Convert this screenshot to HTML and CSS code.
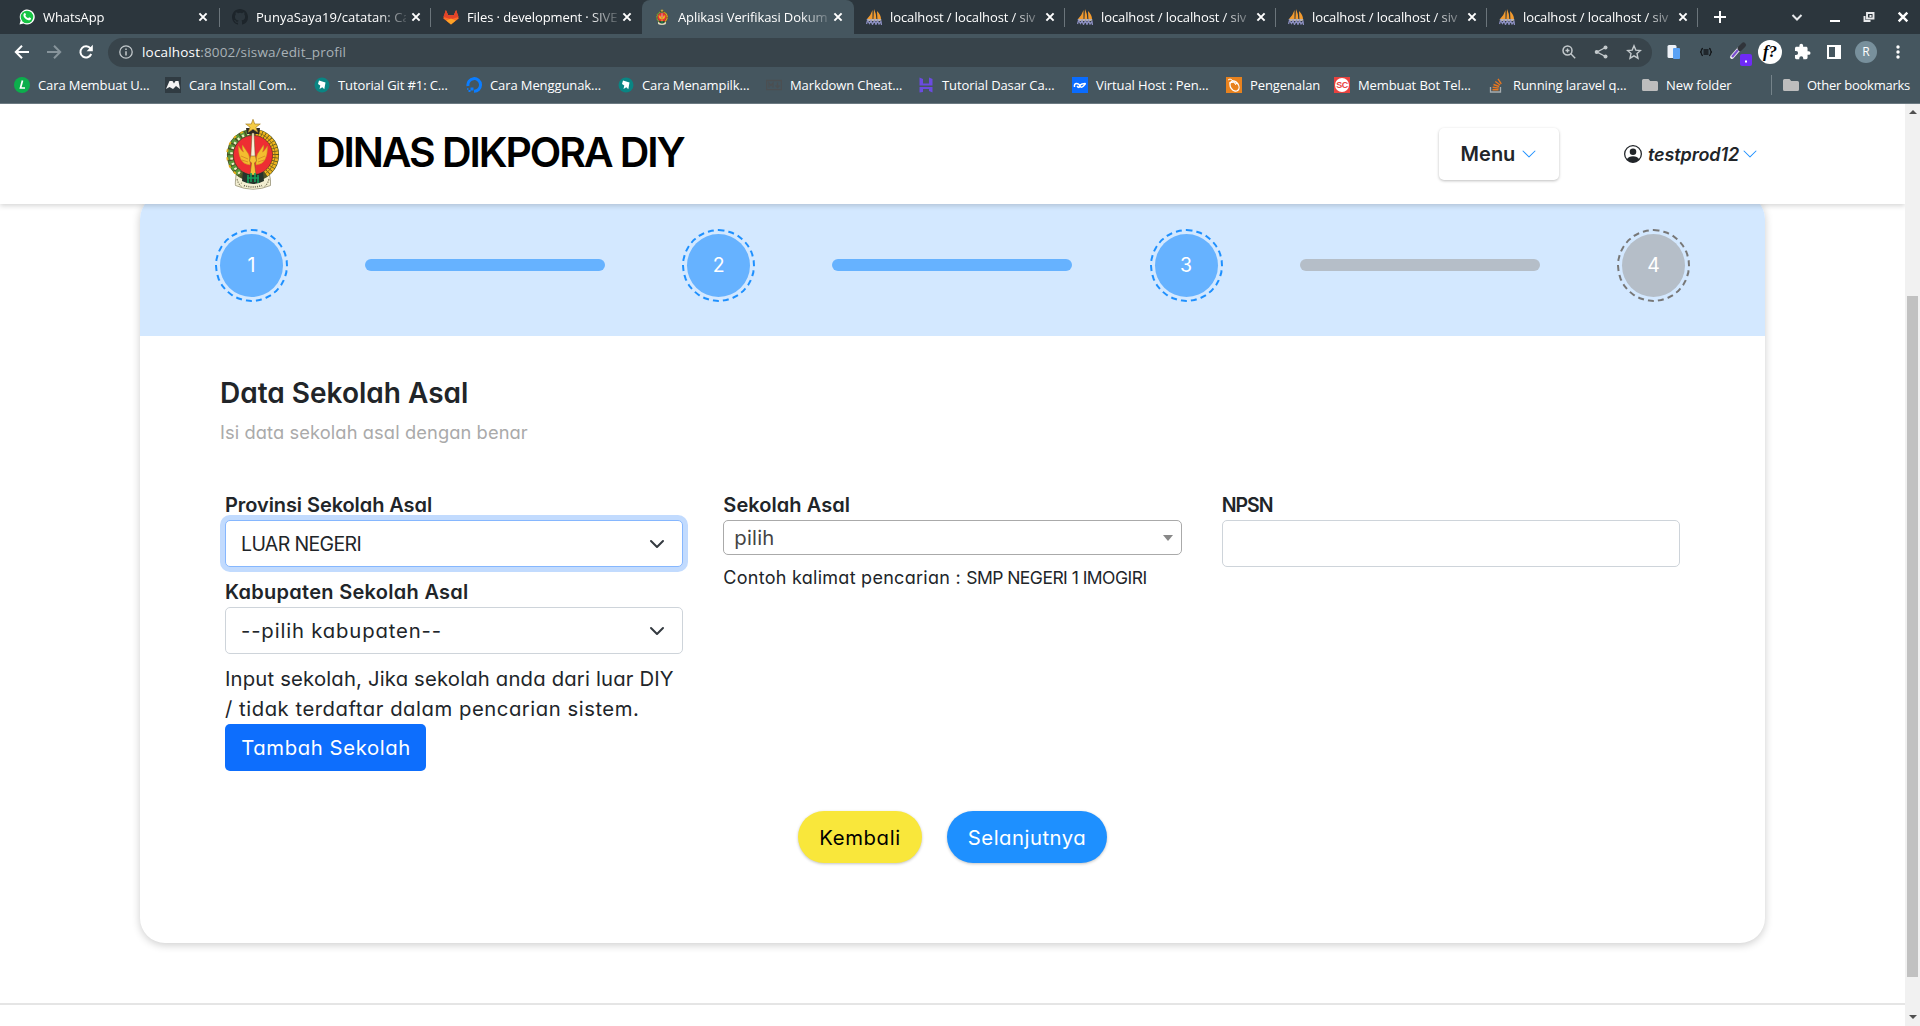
FILE: index.html
```html
<!DOCTYPE html>
<html lang="id">
<head>
<meta charset="utf-8">
<title>Aplikasi Verifikasi Dokumen</title>
<link rel="stylesheet" href="styles.css">
</head>
<body>
<svg class="defs" aria-hidden="true">
  <symbol id="i-close" viewBox="0 0 10 10"><path d="M1.4 1.4l7.2 7.2M8.6 1.4L1.4 8.6" stroke="#fff" stroke-width="2" fill="none"/></symbol>
  <symbol id="i-pma" viewBox="0 0 16 16">
    <path d="M6.500 1v9H1Q5 6 6.500 1zM8 0q2.500 5 2.300 10H7.400zM11 2q4 4 4 8h-3.600z" fill="#f29a2e"/>
    <path d="M.5 10h15l-1 2h-13z" fill="#b9b3ad"/><path d="M.5 15l1-3.500 2 3 1.500-3 1.500 4 2-4 1.500 4 1.500-4 1.500 3.500 2-2.500.5 3.500" stroke="#8c8fc0" stroke-width="1.300" fill="none"/>
  </symbol>
  <symbol id="i-folder" viewBox="0 0 16 14"><path d="M1.500 1h5l1.700 2h6.300Q16 3 16 4.500v7Q16 13 14.500 13h-13Q0 13 0 11.500v-9Q0 1 1.500 1z" fill="#bdbdbd"/></symbol>
  <symbol id="i-teal" viewBox="0 0 16 16"><circle cx="8" cy="8" r="7.500" fill="#0a8583"/><path d="M5 3.500l6.500 2-1.200 6.700-2-2L5.500 12l.8-3.500L4 7z" fill="#fff"/></symbol>
  <symbol id="i-chev" viewBox="0 0 16 16"><path fill-rule="evenodd" fill="currentColor" d="M1.646 4.646a.5.5 0 0 1 .708 0L8 10.293l5.646-5.647a.5.5 0 0 1 .708.708l-6 6a.5.5 0 0 1-.708 0l-6-6a.5.5 0 0 1 0-.708z"/></symbol>
  <symbol id="i-emblem" viewBox="0 0 54 71">
    <path d="M10 56q-1 9-.5 10.500Q27 74 44.500 66.500 45 60 43.500 56z" fill="#f3efd2" stroke="#8a8568" stroke-width=".7"/>
    <circle cx="27" cy="36" r="22.800" fill="none" stroke="#4c5226" stroke-width="6.600"/>
    <path d="M24 13.500A22.800 22.800 0 0 0 15 55" fill="none" stroke="#57983a" stroke-width="6.400" stroke-dasharray="4 1.400"/>
    <path d="M23 14.500A22.800 22.800 0 0 0 14 54.500" fill="none" stroke="#eef0c8" stroke-width="2.600" stroke-dasharray="2 3.400"/>
    <path d="M25 11.500A24.500 24.500 0 0 0 13 57" fill="none" stroke="#e3ab18" stroke-width="1.800" stroke-dasharray="3 5"/>
    <path d="M30 13.500A22.800 22.800 0 0 1 39 55" fill="none" stroke="#f0b51c" stroke-width="6.400" stroke-dasharray="2.500 .7"/>
    <path d="M30 13.500A22.800 22.800 0 0 1 39 55" fill="none" stroke="#83651a" stroke-width=".8"/>
    <circle cx="27" cy="36" r="19.600" fill="#ee2e33" stroke="#5b1512" stroke-width=".6"/>
    <path d="M20 9h14l-1 6H21z" fill="#2d2a25"/>
    <path d="M24 46Q12 45 12.500 27q3 5 5 6-2-4-1-7 4 6 6 9 2 4 1.500 11zM30 46q12-1 11.500-19-3 5-5 6 2-4 1-7-4 6-6 9-2 4-1.500 11z" fill="#f4bd2e" stroke="#c68420" stroke-width=".5"/>
    <path d="M15 37l7 3M16 41l6 2M39 37l-7 3M38 41l-6 2" stroke="#cf7b23" stroke-width=".7"/>
    <path d="M26 14h2l1.200 24h-4.400z" fill="#f8f1d8" stroke="#6e5325" stroke-width=".5"/>
    <path d="M24.500 37h5l1 5-2 2 1.500 12h-6l1.500-12-2-2z" fill="#f6c336" stroke="#6e5325" stroke-width=".5"/>
    <path d="M17 53q10 6 20 0l1 9q-11 6-22 0z" fill="#25342c"/>
    <path d="M22 56v8M25 54v9M29 54v9M32 56v8M21 59h12" stroke="#16a05c" stroke-width="1.600"/>
    <path d="M11 60q2 8 7 7M43 60q-2 8-7 7M15 64q12 6 24 0" fill="none" stroke="#7d785d" stroke-width="1.100" stroke-dasharray="1.500 1"/>
    <path d="M16 63q11 6 22 0l1 4q-12 5-24 0z" fill="#f3efd2"/>
    <path d="M18 66.500q9 3 18 0" fill="none" stroke="#6a6650" stroke-width="1.500" stroke-dasharray="1 1.200"/>
    <path d="M27 .3l1.700 4.700h5.600l-4.400 3.200 1.800 5-4.700-3-4.700 3 1.800-5-4.400-3.200h5.600z" fill="#f5cc45" stroke="#a8812a" stroke-width=".7"/>
  </symbol>
</svg>

<div class="tabs">
  <div class="tab tab-first"><svg class="fav" viewBox="0 0 16 16"><path d="M.5 15.500L1.600 11.500A7.500 7.500 0 1 1 4.500 14.500z" fill="#fff"/><circle cx="8" cy="8" r="6.300" fill="#17c444"/><path d="M5.300 4.200c.7-.5 1.200 0 1.700 1.500l-.7 1q1 1.900 2.900 2.500l.9-1q2.200.7 2 1.300c-.3 1.800-2 2-3.300 1.600C6.200 10.200 4.600 8 4.400 6.500q-.1-1.400.9-2.300z" fill="#fff"/></svg><span class="tt">WhatsApp</span><svg class="x"><use href="#i-close"/></svg></div>
  <div class="tab"><svg class="fav" viewBox="0 0 16 16"><path fill="#1d252b" d="M8 0C3.580 0 0 3.580 0 8c0 3.540 2.290 6.530 5.470 7.590.4.070.55-.17.55-.38v-1.490c-2.010.37-2.530-.49-2.690-.94-.09-.23-.48-.94-.82-1.130-.28-.15-.68-.52-.01-.53.63-.01 1.080.58 1.230.82.72 1.210 1.870.87 2.330.66.070-.52.28-.87.51-1.070-1.780-.2-3.640-.89-3.640-3.950 0-.87.31-1.590.82-2.150-.08-.2-.36-1.020.08-2.120 0 0 .67-.21 2.200.82a7.400 7.400 0 0 1 4 0c1.530-1.040 2.200-.82 2.200-.82.44 1.100.16 1.920.08 2.120.51.56.82 1.270.82 2.150 0 3.070-1.870 3.750-3.650 3.950.29.25.54.73.54 1.480v2.200c0 .21.15.46.55.38A8.010 8.010 0 0 0 16 8c0-4.420-3.580-8-8-8z"/></svg><span class="tt punya">PunyaSaya19/catatan: Cat</span><svg class="x"><use href="#i-close"/></svg></div>
  <div class="tab no-sep"><svg class="fav" viewBox="0 0 16 16"><path d="M8 15.500L.3 9.500 2.900 1l2.300 5.200h5.600L13.100 1l2.600 8.500z" fill="#fc6d26"/><path d="M2.900 1l2.300 5.200h5.600L13.100 1l2.600 7-3.700 1-4 1.300-4-1.300-3.700-1z" fill="#e24329"/><path d="M8 15.500l-4.700-4L8 9.500l4.700 2z" fill="#fca326"/></svg><span class="tt">Files · development · SIVE</span><svg class="x"><use href="#i-close"/></svg></div>
  <div class="tab active no-sep"><svg class="fav" viewBox="0 0 54 71"><use href="#i-emblem"/></svg><span class="tt">Aplikasi Verifikasi Dokum</span><svg class="x"><use href="#i-close"/></svg></div>
  <div class="tab"><svg class="fav"><use href="#i-pma"/></svg><span class="tt">localhost / localhost / siv</span><svg class="x"><use href="#i-close"/></svg></div>
  <div class="tab"><svg class="fav"><use href="#i-pma"/></svg><span class="tt">localhost / localhost / siv</span><svg class="x"><use href="#i-close"/></svg></div>
  <div class="tab"><svg class="fav"><use href="#i-pma"/></svg><span class="tt">localhost / localhost / siv</span><svg class="x"><use href="#i-close"/></svg></div>
  <div class="tab"><svg class="fav"><use href="#i-pma"/></svg><span class="tt">localhost / localhost / siv</span><svg class="x"><use href="#i-close"/></svg></div>
  <svg class="plus" viewBox="0 0 12 12"><path d="M6 0v12M0 6h12" stroke="#fff" stroke-width="2"/></svg>
  <div class="winctl">
    <svg width="12" height="12" viewBox="0 0 12 12"><path d="M1.500 4L6 8.500 10.500 4" stroke="#e8eaec" stroke-width="2" fill="none"/></svg>
    <svg width="12" height="12" viewBox="0 0 12 12"><path d="M1 10h10" stroke="#fff" stroke-width="2"/></svg>
    <svg width="12" height="12" viewBox="0 0 12 12"><path d="M4 2h6.500v5.500H4zM7.500 10H1.500V5" stroke="#e8eaec" stroke-width="1.900" fill="none"/><path d="M6.500 4h2v2h-2z" fill="#e8eaec"/></svg>
    <svg width="12" height="12"><use href="#i-close"/></svg>
  </div>
</div>

<div class="toolbar">
  <div class="nav">
    <svg width="16" height="16" viewBox="0 0 16 16"><path d="M15 8H2.500M8 1.800L1.800 8 8 14.200" stroke="#fff" stroke-width="2" fill="none"/></svg>
    <svg width="16" height="16" viewBox="0 0 16 16"><path d="M1 8h12.500M8 1.800L14.200 8 8 14.200" stroke="#87949b" stroke-width="2" fill="none"/></svg>
    <svg width="16" height="16" viewBox="0 0 16 16"><path d="M13.200 10A5.600 5.600 0 1 1 12.500 4.500" stroke="#fff" stroke-width="2" fill="none"/><path d="M14.800.8v6.400H8.600z" fill="#fff"/></svg>
  </div>
  <div class="omni">
    <svg width="14" height="14" viewBox="0 0 14 14"><circle cx="7" cy="7" r="6.200" fill="none" stroke="#c3c9cc" stroke-width="1.300"/><path d="M7 6.200V10.500M7 3.500V5" stroke="#c3c9cc" stroke-width="1.500"/></svg>
    <span class="url"><b>localhost</b>:8002/siswa/edit_profil</span>
    <svg width="14" height="14" viewBox="0 0 14 14"><circle cx="5.500" cy="5.500" r="4.500" fill="none" stroke="#c3c9cc" stroke-width="1.500"/><path d="M8.800 8.800l4.400 4.400M3.500 5.500h4M5.500 3.500v4" stroke="#c3c9cc" stroke-width="1.400"/></svg>
    <svg width="14" height="14" viewBox="0 0 14 14"><path d="M11.500 2.500L3 7l8.500 4.500" stroke="#c3c9cc" stroke-width="1.400" fill="none"/><g fill="#c3c9cc"><circle cx="11.500" cy="2.500" r="2"/><circle cx="2.700" cy="7" r="2"/><circle cx="11.500" cy="11.500" r="2"/></g></svg>
    <svg width="16" height="16" viewBox="0 0 16 16"><path d="M8 1.800l1.800 4.300 4.700.4-3.500 3.100 1 4.600L8 11.800l-4 2.400 1-4.600-3.500-3.100 4.700-.4z" fill="none" stroke="#c3c9cc" stroke-width="1.400"/></svg>
  </div>
  <div class="exts">
    <svg viewBox="0 0 24 24"><rect x="5.500" y="5" width="9" height="13" rx="1.500" fill="#eef2f8"/><rect x="11" y="8" width="7" height="11" rx="1" fill="#5aa2f5"/></svg>
    <svg viewBox="0 0 24 24"><path d="M9 8.500Q7.500 8.500 7.500 10q0 2-1.500 2 1.500 0 1.500 2 0 1.500 1.500 1.500M15 8.500q1.500 0 1.500 1.500 0 2 1.500 2-1.500 0-1.500 2 0 1.500-1.500 1.500M9.500 10h5M9.500 12h5M9.500 14h5" stroke="#15191c" stroke-width="1.300" fill="none"/></svg>
    <svg viewBox="0 0 24 24"><path d="M6 17l7-8" stroke="#eee" stroke-width="4" stroke-linecap="round"/><path d="M6 17l6-7" stroke="#7b4fd0" stroke-width="2.200"/><path d="M14 8.500l3.500-3.500" stroke="#30343a" stroke-width="5" stroke-linecap="round"/><rect x="14" y="14" width="12" height="12" rx="2" fill="#6f2bf5"/><rect x="19" y="20.500" width="2" height="2" fill="#fff"/></svg>
    <span class="fq">f?</span>
    <svg viewBox="0 0 24 24"><path transform="translate(3.500 3) scale(.74)" d="M20.500 11H19V7c0-1.100-.9-2-2-2h-4V3.500a2.500 2.500 0 0 0-5 0V5H4c-1.100 0-2 .9-2 2v3.800h1.500a2.700 2.700 0 0 1 0 5.400H2V20c0 1.100.9 2 2 2h3.800v-1.500a2.700 2.700 0 0 1 5.400 0V22H17c1.100 0 2-.9 2-2v-4h1.500a2.500 2.500 0 0 0 0-5z" fill="#fff"/></svg>
    <svg viewBox="0 0 24 24"><path d="M5 5h14v14H5zM7 7v10h6V7z" fill="#fff" fill-rule="evenodd"/></svg>
    <span class="avatar">R</span>
    <svg viewBox="0 0 24 24" fill="#fff"><circle cx="12" cy="7" r="1.700"/><circle cx="12" cy="12" r="1.700"/><circle cx="12" cy="17" r="1.700"/></svg>
  </div>
</div>

<div class="marks">
  <div class="mk m1"><svg viewBox="0 0 16 16"><circle cx="8" cy="8" r="8" fill="#0cae4c"/><path d="M8.500 3.500L6.500 11h4.500" stroke="#fff" stroke-width="1.700" fill="none"/></svg>Cara Membuat U…</div>
  <div class="mk m2"><svg viewBox="0 0 16 16"><path d="M0 0h16v16H0z" fill="#303b42"/><path d="M1 12L4.500 4h3l1.500 2.500L10.500 4h3L15 12l-4-3-3 3-3.500-2z" fill="#f4f4f4"/></svg>Cara Install Com…</div>
  <div class="mk m3"><svg><use href="#i-teal"/></svg>Tutorial Git #1: C…</div>
  <div class="mk m4"><svg viewBox="0 0 16 16"><path d="M8 14.200A6.300 6.300 0 1 0 2 9" fill="none" stroke="#0b7dff" stroke-width="3"/><path d="M4.500 10.500h3v3h-3zM2.500 13h2v2h-2zM1 11.200h1.500v1.500H1z" fill="#0b7dff"/></svg>Cara Menggunak…</div>
  <div class="mk m5"><svg><use href="#i-teal"/></svg>Cara Menampilk…</div>
  <div class="mk m6"><svg viewBox="0 0 16 16"><path d="M.6 3.500h14.800v9.200H.6zM3 10.500v-4.500l2 2.500 2-2.500v4.500M11.500 5.500v5M9.500 8.500l2 2 2-2" fill="none" stroke="#4b4f52" stroke-width="1.300"/></svg>Markdown Cheat…</div>
  <div class="mk m7"><svg viewBox="0 0 16 16"><path d="M1.500.5L5 2v4.500h6V.5L14.500 2v6.500h-13zM1.500 15.500v-5.500h13v5.500L11 14v-2H5v3z" fill="#6b4be0"/></svg>Tutorial Dasar Ca…</div>
  <div class="mk m8"><svg viewBox="0 0 16 16"><path d="M0 0h16v16H0z" fill="#0a6cff"/><path d="M2.500 10Q2 6.500 4.500 6.500T8 9t3.500 0T13 6.500 10 7 7.500 9.500 5 9" fill="none" stroke="#fff" stroke-width="1.500"/></svg>Virtual Host : Pen…</div>
  <div class="mk m9"><svg viewBox="0 0 16 16"><path d="M0 0h16v16H0z" fill="#e8821e"/><ellipse cx="8.500" cy="9" rx="4" ry="5.500" transform="rotate(-35 8.500 9)" fill="none" stroke="#fff" stroke-width="1.300"/><path d="M2 3q2-2 4 0t4 5M3 6q4-2 9 1" fill="none" stroke="#fff" stroke-width="1"/></svg>Pengenalan</div>
  <div class="mk m10"><svg viewBox="0 0 16 16"><path d="M0 0h16v16H0z" fill="#e9423f"/><circle cx="8" cy="8" r="7" fill="#fff"/><text x="8" y="11.300" text-anchor="middle" class="sc">SC</text></svg>Membuat Bot Tel…</div>
  <div class="mk m11"><svg viewBox="0 0 16 16"><path d="M1.500 10v5h10v-5" fill="none" stroke="#a7adb0" stroke-width="1.300"/><path d="M3.500 12.800h6M3.700 10.300l6 .8M4.500 7.500l5.700 2M6.300 4.500l4.800 3.500M9 1.800l3.300 5" stroke="#e8761f" stroke-width="1.400"/></svg>Running laravel q…</div>
  <div class="mk m12"><svg><use href="#i-folder"/></svg>New folder</div>
  <div class="mk other"><svg><use href="#i-folder"/></svg>Other bookmarks</div>
</div>

<div class="viewport">
  <div class="page">
    <header class="head">
      <svg class="logo"><use href="#i-emblem"/></svg>
      <h1>DINAS DIKPORA DIY</h1>
      <button class="menu">Menu<svg class="chev"><use href="#i-chev"/></svg></button>
      <div class="user"><svg class="person" viewBox="0 0 17 17"><circle cx="8.500" cy="8.500" r="7.900" fill="none" stroke="#212529" stroke-width="1.200"/><circle cx="8.500" cy="6.400" r="3.100" fill="#212529"/><path d="M2.500 13.600Q4.500 10.600 8.500 10.600t6 3A8 8 0 0 1 2.500 13.600z" fill="#212529"/></svg><i>testprod12</i><svg class="chev"><use href="#i-chev"/></svg></div>
    </header>
    <main class="card">
      <div class="steps">
        <span class="step"><span>1</span></span><span class="bar"></span>
        <span class="step"><span>2</span></span><span class="bar"></span>
        <span class="step"><span>3</span></span><span class="bar off"></span>
        <span class="step off"><span>4</span></span>
      </div>
      <div class="body">
        <h2>Data Sekolah Asal</h2>
        <p class="sub">Isi data sekolah asal dengan benar</p>
        <div class="cols">
          <div>
            <label class="l-prov">Provinsi Sekolah Asal</label>
            <div class="select focus"><span class="v-luar">LUAR NEGERI</span><svg viewBox="0 0 16 16"><path d="M2 5l6 6 6-6" fill="none" stroke="#343a40" stroke-width="2" stroke-linecap="round" stroke-linejoin="round"/></svg></div>
            <label class="l-kab">Kabupaten Sekolah Asal</label>
            <div class="select"><span class="v-kab">--pilih kabupaten--</span><svg viewBox="0 0 16 16"><path d="M2 5l6 6 6-6" fill="none" stroke="#343a40" stroke-width="2" stroke-linecap="round" stroke-linejoin="round"/></svg></div>
            <p class="note"><span class="n1">Input sekolah, Jika sekolah anda dari luar DIY</span><br><span class="n2">/ tidak terdaftar dalam pencarian sistem.</span></p>
            <button class="add">Tambah Sekolah</button>
          </div>
          <div>
            <label class="l-sek">Sekolah Asal</label>
            <div class="select2"><span>pilih</span><i class="arrow"></i></div>
            <p class="hint">Contoh kalimat pencarian : <span>SMP NEGERI 1 IMOGIRI</span></p>
          </div>
          <div>
            <label class="l-npsn">NPSN</label>
            <input class="inp" type="text">
          </div>
        </div>
        <div class="actions">
          <button class="pill yellow">Kembali</button>
          <button class="pill blue">Selanjutnya</button>
        </div>
      </div>
    </main>
    <hr>
  </div>
  <div class="scroll"><i class="up"></i><span class="thumb"></span><i class="down"></i></div>
</div>
</body>
</html>
```
FILE: styles.css
```css
*{box-sizing:border-box}
body{margin:0;width:1920px;height:1026px;overflow:hidden;background:#fff;display:flex;flex-direction:column;color:#212529;font-family:Inter,"Open Sans",sans-serif;font-feature-settings:"cv11"}
svg{display:block;flex:none}
.defs{position:absolute;width:0;height:0}
button{font:inherit;font-feature-settings:inherit;border:0;margin:0}

/* browser chrome */
.tabs,.toolbar,.marks{flex:none;display:flex;align-items:center;font-family:"Open Sans","Noto Sans",sans-serif;font-size:13px;letter-spacing:-.1px;color:#fff;font-feature-settings:normal}
.tabs{height:34px;background:#2c363d;padding-left:9px}
.tab{width:211px;height:34px;display:flex;align-items:center;padding:0 10px 0 12px;position:relative}
.tab-first{padding-left:10px}
.tab:not(.no-sep)::after{content:"";position:absolute;right:0;top:8px;width:1px;height:19px;background:#6b757b}
.tab.active{background:#45565f;border-radius:8px 8px 0 0;width:212px}
.fav{width:16px;height:16px}
.tt{width:150px;flex:none;margin:0 5px 0 8px;white-space:nowrap;line-height:20px;-webkit-mask-image:linear-gradient(90deg,#000 122px,transparent 156px)}
.punya{letter-spacing:.05px}
.x{width:10px;height:10px}
.plus{width:12px;height:12px;margin-left:16px}
.winctl{margin-left:auto;display:flex;gap:22px;padding-right:11px}
.winctl svg:first-child{margin-right:4px}
.toolbar{height:35px;background:#45565f}
.nav{display:flex;gap:16px;width:108px;padding-left:14px}
.omni{width:1544px;height:29px;border-radius:15px;background:#38444b;margin-top:2px;display:flex;align-items:center;padding:0 10px 1px 11px}
.url{flex:1;padding:0 0 1px 9px;color:#a9b2b7;font-size:13.500px;letter-spacing:.18px}
.url b{font-weight:400;color:#fff}
.omni>svg{margin-right:18px}
.omni>svg:first-child{margin-right:0}
.omni>svg:last-child{margin-right:0}
.exts{display:flex;align-items:center;gap:8px;padding-left:10px}
.exts svg{width:24px;height:24px;overflow:visible}
.exts>*{flex:none}
.fq{width:24px;height:24px;border-radius:50%;background:#fff;color:#000;font:italic bold 17px/23px "Liberation Serif",serif;text-align:center}
.avatar{width:22px;height:22px;margin:0 1px;border-radius:50%;background:#78909c;font-size:12px;line-height:22px;text-align:center}
.marks{height:35px;background:#45565f;border-bottom:1px solid #6c7a82;padding:0 0 2px 14px}
.mk{display:flex;align-items:center;gap:8px;white-space:nowrap;flex:none;line-height:20px}
.mk svg{width:16px;height:16px}
.m1{width:151px}.m2{width:149px}.m3{width:152px}.m4{width:152px}.m5{width:148px}.m6{width:152px}.m7{width:154px}.m8{width:154px}.m9{width:108px}.m10{width:155px}.m11{width:153px}.m12{width:129px}
.other{border-left:1px solid #75838a;padding-left:11px;letter-spacing:-.25px}
.sc{font:bold 9px "Liberation Sans",sans-serif;fill:#e9423f;letter-spacing:-.5px}

/* page */
.viewport{flex:1;display:flex;min-height:0}
.page{width:1905px;overflow:hidden}
.head{position:relative;z-index:1;height:100px;background:#fff;box-shadow:0 2px 5px rgba(0,0,0,.16);display:flex;align-items:center;padding-left:226px}
.logo{width:54px;height:71px}
h1{margin:0 0 4px 36px;width:1123px;font-size:41px;font-weight:600;line-height:50px;letter-spacing:-2.1px;color:#000;white-space:nowrap}
.menu{width:120px;height:52px;background:#fff;border-radius:5px;box-shadow:0 1px 3px rgba(0,0,0,.26);font-size:20px;font-weight:600;color:#212529;display:flex;align-items:center;justify-content:center;gap:6px;padding:0}
.chev{width:16px;height:16px;color:#1e90ff}
.user{display:flex;align-items:center;margin-left:65px;font-size:18px;font-weight:600;letter-spacing:-.1px}
.user i{margin:0 3px 0 6px}
.person{width:18px;height:18px}
.card{width:1625px;height:749px;margin:-10px 0 0 140px;border-radius:25px;overflow:hidden;background:#fff;box-shadow:0 2px 8px rgba(0,0,0,.2)}
.steps{height:142px;background:#d3e8ff;display:flex;align-items:center;justify-content:space-between;padding:0 75px}
.step{width:73px;height:73px;border-radius:50%;border:2px dashed #1e90ff;padding:3px;color:#fff;font-size:19.500px}
.step span{display:flex;align-items:center;justify-content:center;height:100%;border-radius:50%;background:#66b2ff}
.step.off{border-color:#777}
.step.off span,.bar.off{background:#b5bec8}
.bar{width:240px;height:12px;border-radius:6px;background:#66b2ff}
.body{padding:40px 80px 80px}
h2{margin:0 0 9px;font-size:28px;line-height:34px;font-weight:600;letter-spacing:0}
.sub{margin:0 0 45px;font-size:18.300px;line-height:26px;color:#aaa;letter-spacing:.1px}
.cols{display:grid;grid-template-columns:repeat(3,1fr);gap:40px;padding:0 5px;font-size:20.300px;line-height:30px}
label{display:block;font-weight:600;font-size:20px;height:30px}
.select,.inp,.select2{border:1px solid #ced4da;border-radius:5px;background:#fff;display:flex;align-items:center;justify-content:space-between}
.select{height:47px;padding:0 17px 0 15px;margin-bottom:10px}
.select svg{width:16px;height:16px}
.focus{border-color:#86b7fe;box-shadow:0 0 0 5px #c2dbfe}
.inp{width:100%;height:47px}
.select2{height:35px;border-color:#aaa;padding:0 8px 0 10px;color:#444;margin-bottom:10px}
.arrow{border:5px solid transparent;border-top:6px solid #888;border-bottom:0}
.note,.hint{margin:0;white-space:nowrap}
.note{height:60px}
.add{display:block;width:201px;height:47px;border-radius:5px;background:#0d6efd;color:#fff;padding:0 0 0 1px;letter-spacing:.6px;white-space:nowrap}
.actions{display:flex;justify-content:center;gap:25px;padding-top:40px;font-size:20.300px}
.pill{height:52px;border-radius:26px;box-shadow:0 1px 3px rgba(0,0,0,.24);padding:0}
.yellow{width:124px;background:#f9e73b;color:#000;letter-spacing:.65px}
.blue{width:160px;background:#1e90ff;color:#fff;letter-spacing:.5px}
hr{margin:60px 0 0;border:0;height:2px;background:#e5e5e5}
.l-prov{letter-spacing:-.08px}.l-kab{letter-spacing:.28px}.l-sek{letter-spacing:.05px}.l-npsn{font-size:19.500px;letter-spacing:-.97px}
.v-luar{font-size:19.500px;letter-spacing:-.65px}.v-kab{letter-spacing:.85px}.select2 span{letter-spacing:.2px}
.n1{letter-spacing:.17px}.n2{letter-spacing:.53px}
.hint{font-size:18px;line-height:26px;letter-spacing:.27px}.hint span{font-size:17.500px;letter-spacing:-.53px}
.scroll{width:15px;background:#f1f1f1;display:flex;flex-direction:column;align-items:center}
.up,.down{border:4px solid transparent}
.up{border-top:0;border-bottom:4px solid #505050;margin-top:6px}
.thumb{width:11px;height:681px;margin-top:182px;background:#c1c1c1}
.down{border-bottom:0;border-top:4px solid #505050;margin-top:38px}
```
